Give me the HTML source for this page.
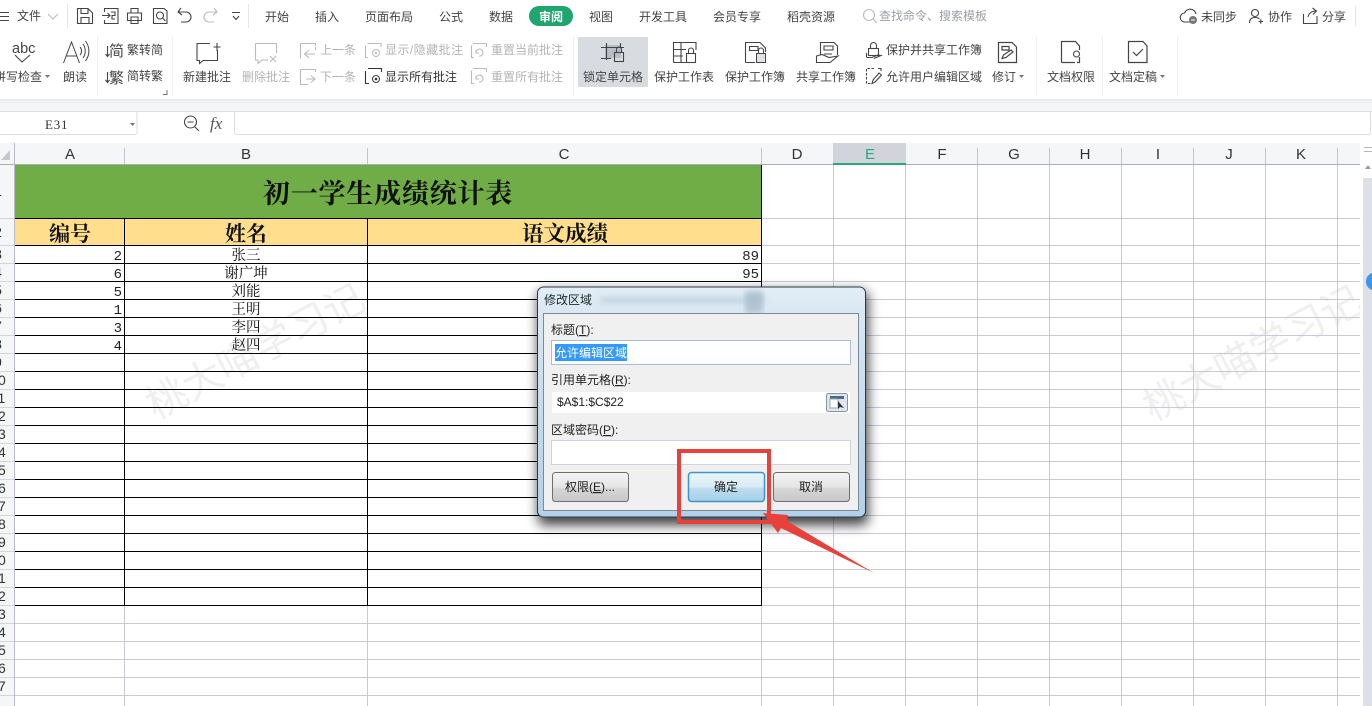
<!DOCTYPE html>
<html lang="zh"><head><meta charset="utf-8"><title>初一学生成绩统计表</title>
<style>
html,body{margin:0;padding:0;width:1372px;height:706px;overflow:hidden;background:#fff}
svg{display:block}
text{font-family:"Liberation Sans","Noto Sans CJK SC",sans-serif;font-size:12px;fill:#444}
.d{fill:#b4b4b4}
.s{font-family:"Liberation Serif","Noto Serif CJK SC",serif;fill:#111;font-size:14.5px}
.m{font-family:"Liberation Mono",monospace;fill:#222;font-size:14px}
.h{font-family:"Noto Serif CJK SC",serif;font-weight:700;fill:#111}
.c{font-size:15px;fill:#333;text-anchor:middle}
.r{font-size:14px;fill:#333;text-anchor:middle}
.w{font-size:40px;fill:#efeff1}
.i{fill:none;stroke:#444;stroke-width:1.1}
.g{fill:none;stroke:#bbb;stroke-width:1.1}
</style></head><body>
<svg width="1372" height="706" viewBox="0 0 1372 706" xmlns="http://www.w3.org/2000/svg">
<defs>
<linearGradient id="btn" x1="0" y1="0" x2="0" y2="1"><stop offset="0" stop-color="#f4f4f4"/><stop offset=".5" stop-color="#e6e6e6"/><stop offset=".55" stop-color="#d6d6d6"/><stop offset="1" stop-color="#c8c8c8"/></linearGradient>
<linearGradient id="ok" x1="0" y1="0" x2="0" y2="1"><stop offset="0" stop-color="#e9f5fb"/><stop offset=".5" stop-color="#d8ebf5"/><stop offset=".55" stop-color="#bcdcee"/><stop offset="1" stop-color="#a8d0e8"/></linearGradient>
<linearGradient id="glass" x1="0" y1="0" x2="0" y2="1"><stop offset="0" stop-color="#e2edf6"/><stop offset=".2" stop-color="#d3e4f1"/><stop offset="1" stop-color="#b4d0e8"/></linearGradient>
<linearGradient id="band" x1="0" y1="0" x2="0" y2="1"><stop offset="0" stop-color="#e6e7e9"/><stop offset=".3" stop-color="#f3f4f6"/><stop offset="1" stop-color="#f5f5f7"/></linearGradient>
<filter id="sh" x="-15%" y="-15%" width="130%" height="135%"><feGaussianBlur stdDeviation="6"/></filter>
<filter id="bl" x="-10%" y="-100%" width="120%" height="300%"><feGaussianBlur stdDeviation="3"/></filter>
</defs>

<!-- sheet -->
<rect x="0" y="135" width="1372" height="571" fill="#fff"/>
<text class="w" transform="translate(156 420) rotate(-28)">桃大喵学习记</text>
<text class="w" transform="translate(1153 422) rotate(-28)">桃大喵学习记</text>
<!-- gray grid -->
<path stroke="#c8cad6" fill="none" d="M124.5 605V706M367.5 605V706M761.5 605V706M833.5 165V706M905.5 165V706M977.5 165V706M1049.5 165V706M1121.5 165V706M1193.5 165V706M1265.5 165V706M1337.5 165V706
M762 218.5H1360M762 245.5H1360M762 263.5H1360M762 281.5H1360M762 299.5H1360M762 317.5H1360M762 335.5H1360M762 353.5H1360M762 371.5H1360M762 389.5H1360M762 407.5H1360M762 425.5H1360M762 443.5H1360M762 461.5H1360M762 479.5H1360M762 497.5H1360M762 515.5H1360M762 533.5H1360M762 551.5H1360M762 569.5H1360M762 587.5H1360M762 605.5H1360M15 623.5H1360M15 641.5H1360M15 659.5H1360M15 677.5H1360M15 695.5H1360"/>

<!-- table fills -->
<rect x="15" y="165" width="746" height="53" fill="#70ad47"/>
<rect x="15" y="219" width="746" height="26" fill="#ffdf8e"/>
<text class="h" x="388" y="203" text-anchor="middle" style="font-size:27px;letter-spacing:.8px">初一学生成绩统计表</text>
<text class="h" x="70" y="241" text-anchor="middle" style="font-size:21px">编号</text>
<text class="h" x="246" y="241" text-anchor="middle" style="font-size:21px">姓名</text>
<text class="h" x="565" y="241" text-anchor="middle" style="font-size:21.500px">语文成绩</text>
<path stroke="#000" fill="none" d="M124.5 218V605M367.5 218V605M761.5 164V606
M15 218.5H762M15 245.5H762M15 263.5H762M15 281.5H762M15 299.5H762M15 317.5H762M15 335.5H762M15 353.5H762M15 371.5H762M15 389.5H762M15 407.5H762M15 425.5H762M15 443.5H762M15 461.5H762M15 479.5H762M15 497.5H762M15 515.5H762M15 533.5H762M15 551.5H762M15 569.5H762M15 587.5H762M15 605.5H762"/>
<text class="m" x="122" y="260" text-anchor="end">2</text>
<text class="m" x="122" y="278" text-anchor="end">6</text>
<text class="m" x="122" y="296" text-anchor="end">5</text>
<text class="m" x="122" y="314" text-anchor="end">1</text>
<text class="m" x="122" y="332" text-anchor="end">3</text>
<text class="m" x="122" y="350" text-anchor="end">4</text>
<text class="m" x="759" y="260" text-anchor="end">89</text>
<text class="m" x="759" y="278" text-anchor="end">95</text>
<text class="s" x="246" y="260" text-anchor="middle">张三</text>
<text class="s" x="246" y="278" text-anchor="middle">谢广坤</text>
<text class="s" x="246" y="296" text-anchor="middle">刘能</text>
<text class="s" x="246" y="314" text-anchor="middle">王明</text>
<text class="s" x="246" y="332" text-anchor="middle">李四</text>
<text class="s" x="246" y="350" text-anchor="middle">赵四</text>

<!-- column header -->
<rect x="0" y="143" width="1360" height="21" fill="#f5f6f8"/>
<rect x="833" y="143" width="73" height="21" fill="#d1d4da"/>
<path stroke="#c3c6ce" fill="none" d="M124.5 148V164M367.5 148V164M761.5 148V164M977.5 148V164M1049.5 148V164M1121.5 148V164M1193.5 148V164M1265.5 148V164M1337.5 148V164"/>
<path stroke="#a9adb5" fill="none" d="M0 164.5H833M906 164.5H1360"/>
<rect x="833" y="163" width="73" height="2" fill="#2ea67c"/>
<path d="M1 160H10V150Z" fill="#c4c7cc"/>
<text class="c" x="70" y="159">A</text><text class="c" x="246" y="159">B</text><text class="c" x="564" y="159">C</text><text class="c" x="797" y="159">D</text><text class="c" x="870" y="159" style="fill:#2ea67c">E</text><text class="c" x="942" y="159">F</text><text class="c" x="1014" y="159">G</text><text class="c" x="1085" y="159">H</text><text class="c" x="1158" y="159">I</text><text class="c" x="1229" y="159">J</text><text class="c" x="1301" y="159">K</text>

<!-- row header -->
<rect x="0" y="165" width="14" height="541" fill="#f5f6f8"/>
<path stroke="#b9bcc6" fill="none" d="M14.5 143V706"/>
<path stroke="#d3d5dc" fill="none" d="M0 218.5H14M0 245.5H14M0 263.5H14M0 281.5H14M0 299.5H14M0 317.5H14M0 335.5H14M0 353.5H14M0 371.5H14M0 389.5H14M0 407.5H14M0 425.5H14M0 443.5H14M0 461.5H14M0 479.5H14M0 497.5H14M0 515.5H14M0 533.5H14M0 551.5H14M0 569.5H14M0 587.5H14M0 605.5H14M0 623.5H14M0 641.5H14M0 659.5H14M0 677.5H14M0 695.5H14"/>
<text class="r" x="-2" y="196">1</text><text class="r" x="-2" y="237">2</text><text class="r" x="-2" y="259">3</text><text class="r" x="-2" y="277">4</text><text class="r" x="-2" y="295">5</text><text class="r" x="-2" y="313">6</text><text class="r" x="-2" y="331">7</text><text class="r" x="-2" y="349">8</text><text class="r" x="-2" y="367">9</text>
<text class="r" x="-2" y="385">10</text><text class="r" x="-2" y="403">11</text><text class="r" x="-2" y="421">12</text><text class="r" x="-2" y="439">13</text><text class="r" x="-2" y="457">14</text><text class="r" x="-2" y="475">15</text><text class="r" x="-2" y="493">16</text><text class="r" x="-2" y="511">17</text><text class="r" x="-2" y="529">18</text><text class="r" x="-2" y="547">19</text><text class="r" x="-2" y="565">20</text><text class="r" x="-2" y="583">21</text><text class="r" x="-2" y="601">22</text><text class="r" x="-2" y="619">23</text><text class="r" x="-2" y="637">24</text><text class="r" x="-2" y="655">25</text><text class="r" x="-2" y="673">26</text><text class="r" x="-2" y="691">27</text>

<!-- scrollbar -->
<rect x="1360" y="135" width="12" height="571" fill="#fff"/>
<path stroke="#b5b8c0" fill="none" d="M1364 147.5H1372M1364 151.5H1372"/>
<path d="M1365 169L1368 165L1371 169Z" fill="#9a9da3"/>
<rect x="1363" y="178" width="9" height="528" fill="#dde0e5"/>
<path d="M1372 273A9 9 0 0 0 1372 290Z" fill="#3d97e8"/>

<!-- ribbon -->
<rect x="0" y="0" width="1372" height="99" fill="#fff"/>
<rect x="0" y="99" width="1372" height="12" fill="url(#band)"/>
<!-- formula bar -->
<rect x="0" y="111" width="1372" height="32" fill="#fff"/>
<path stroke="#dcdde0" d="M0 111.500H1372" fill="none"/>
<rect x="-2" y="111.500" width="139" height="23" rx="2" fill="#fff" stroke="#dcdde0"/>
<text x="45" y="129" style="font-family:'Liberation Serif',serif;font-size:13px;letter-spacing:.8px;fill:#333">E31</text>
<path d="M130 123H135L132.500 126Z" fill="#777"/>
<circle class="i" cx="190.500" cy="122" r="6"/><path class="i" d="M187.500 122H193.500M195 127L199 131"/>
<text x="210" y="129" style="font-family:'Liberation Serif',serif;font-style:italic;font-size:17px;fill:#555">fx</text>
<rect x="234.500" y="111.500" width="1136" height="23" rx="2" fill="#fff" stroke="#dcdde0"/>

<!-- title bar -->
<path class="i" d="M0 12.500H9M0 16.500H9M0 20.500H9"/>
<text x="17" y="20">文件</text>
<path class="g" d="M48 14L53 19L58 14"/>
<path stroke="#e6e6e6" fill="none" d="M67.500 4V28M248.500 4V28M1355.500 6V26"/>
<!-- quick icons -->
<path class="i" d="M77.500 8.500H88L92.500 13V23.500H77.500ZM81 8.500V13.500H88V8.500M81 23.500V17.500H89V23.500"/>
<path class="i" d="M104.500 12V8.500H118V23.500H104.500V20M102 15.500H110M107.500 13L110 15.500L107.500 18M111 12H115V15.500H112V19H115"/>
<path class="i" d="M131 13V8.500H138V13M127.500 13H141.500V20.500H127.500ZM131 17H138V23.500H131Z"/>
<path class="i" d="M153.500 8.500H164L167 11V23.500H153.500Z"/><circle class="i" cx="160" cy="15.500" r="3.500"/><path class="i" d="M162.500 18L165.500 21"/>
<path class="i" d="M181 8L178 12L182 15M178.500 12H186A5 5 0 0 1 186 22H181"/>
<path class="g" d="M214 8L217 12L213 15M216.500 12H209A5 5 0 0 0 209 22H214"/>
<path class="i" d="M232 12.500H240M233 16L236 19.500L239 16"/>
<!-- tabs -->
<text x="265" y="21">开始</text><text x="315" y="21">插入</text><text x="365" y="21">页面布局</text><text x="439" y="21">公式</text><text x="489" y="21">数据</text>
<rect x="529" y="6" width="44" height="20" rx="10" fill="#21a56f"/>
<text x="539" y="21" style="fill:#fff;font-weight:700">审阅</text>
<text x="589" y="21">视图</text><text x="639" y="21">开发工具</text><text x="713" y="21">会员专享</text><text x="787" y="21">稻壳资源</text>
<circle class="g" cx="869" cy="15" r="5.500"/><path class="g" d="M873 19L877 23"/>
<text x="879" y="20" style="fill:#9b9ea6">查找命令、搜索模板</text>
<path class="i" d="M1190 22H1185A4.500 4.500 0 0 1 1184.500 13A6 6 0 0 1 1196 14"/><circle cx="1193" cy="20" r="4" fill="#777"/><path d="M1191 20H1195" stroke="#fff"/>
<text x="1201" y="21">未同步</text>
<circle class="i" cx="1255" cy="13" r="3.500"/><path class="i" d="M1249.500 23C1249.500 19 1252 17.500 1255 17.500C1257 17.500 1258.500 18 1259.500 19M1258.500 21.500H1263M1260.800 19.300V23.700"/>
<text x="1268" y="21">协作</text>
<path class="i" d="M1303.500 14V23.500H1317V16M1308 17C1309 13 1312 11 1316 11M1312.500 8L1316.500 11L1313 14.500"/>
<text x="1322" y="21">分享</text>

<!-- ribbon separators -->
<path stroke="#f0f0f0" fill="none" d="M97.500 36V96M172.500 36V96M573.500 36V96M1036.500 36V96M1102.500 36V96M1177.500 36V96"/>
<!-- spell -->
<text x="12" y="53" style="font-size:14.500px;fill:#444">abc</text>
<path class="i" d="M15 55L22 62L30 55"/>
<text x="-6" y="81">拼写检查</text><path d="M45 75H50L47.500 78Z" fill="#777"/>
<path class="i" d="M63.500 63L71.500 42L79.500 63M66.500 56H76.500M80 47C82 49 82 53 80 55M83 44C86 48 86 54 83 58M85.500 41C90 47 90 55 85.500 61" style="stroke-width:1"/>
<text x="63" y="81">朗读</text>
<text x="109" y="56" style="font-size:15px">简</text><path class="i" d="M107.500 46V56M105.500 54L107.500 56.500L109.500 54"/>
<text x="127" y="54">繁转简</text>
<text x="109" y="83" style="font-size:15px">繁</text><path class="i" d="M107.500 72V82M105.500 80L107.500 82.500L109.500 80"/>
<text x="127" y="80">简转繁</text>
<path stroke="#777" fill="none" d="M163 94.500H167V90"/>
<!-- comments -->
<path class="i" d="M210 43.500H197V60.500H199.500V63.500L203 60.500H217.500V50M213.500 47H220.500M217 43V51"/>
<text x="183" y="81">新建批注</text>
<path class="g" d="M255.500 43.500H276.500V53M255.500 43.500V60H258V63.500L262 60H268M270 56L276 62M276 56L270 62"/>
<text class="d" x="242" y="81">删除批注</text>
<path class="g" d="M300.500 43.500H315.500V46M300.500 43.500V58.500M315.500 47V50M309 50L304.500 54L309 58M305 54H315"/>
<text class="d" x="320" y="54">上一条</text>
<path class="g" d="M300.500 69.500H315.500V72M300.500 69.500V84.500H308M306 79H315M311 75.500L315 79L311 82.500"/>
<text class="d" x="320" y="81">下一条</text>
<path class="g" d="M367.500 43.500H381V47M365.500 45.500V57.500H368"/><circle class="g" cx="376" cy="53" r="3.500"/><circle cx="376" cy="53" r="1.200" fill="#bbb"/>
<text class="d" x="385" y="54" textLength="78">显示/隐藏批注</text>
<path class="i" d="M368 68.500H381.500V72M365.500 71V83.500H369" style="stroke:#333"/><circle class="i" cx="376" cy="79" r="3.500"/><circle cx="376" cy="79" r="1.300" fill="#333"/>
<text x="385" y="81" style="fill:#333">显示所有批注</text>
<path class="g" d="M473 43.500H486.500V47M471.500 45.500V57.500H474M476 52A3.500 3.500 0 1 1 479 56M476 50V53H479"/>
<text class="d" x="491" y="54">重置当前批注</text>
<path class="g" d="M473 68.500H486.500V72M471.500 70.500V83.500H474M476 78A3.500 3.500 0 1 1 479 82M476 76V79H479"/>
<text class="d" x="491" y="81">重置所有批注</text>
<!-- protect -->
<rect x="578" y="37" width="70" height="50" fill="#d8dbe0"/>
<rect x="605" y="45" width="16" height="13" fill="#b9bdc7"/>
<path class="i" d="M601 47.500H624M601 58.500H611M606.500 43V60M620.500 43V47"/><rect class="i" x="614.500" y="52.500" width="9" height="9"/><path class="i" d="M616.500 52.500V49.500A2.500 2.500 0 0 1 621.500 49.500V52.500"/>
<text x="583" y="81">锁定单元格</text>
<path class="i" d="M673.500 62.500V42.500H696V50M673.500 49.500H686M673.500 56H683M681 42.500V62.500H686M673.500 62.500H681"/><rect class="i" x="686.500" y="53.500" width="9" height="9"/><path class="i" d="M688.500 53.500V50.500A2.500 2.500 0 0 1 693.500 50.500V53.500"/>
<text x="654" y="81">保护工作表</text>
<path class="i" d="M745.500 62.500V42.500H760L765.500 48V52M745.500 62.500H755M749.500 46.500H758V50.500H749.500Z"/><rect x="756.500" y="53.500" width="9" height="9" fill="#dfe1e5" stroke="#444"/><path class="i" d="M758.500 53.500V50.500A2.500 2.500 0 0 1 763.500 50.500V53.500"/>
<text x="725" y="81">保护工作簿</text>
<path class="i" d="M820.500 55V42.500H834L837.500 46V55M824 46H833V50H824ZM824 54H832M816.500 62.500V56L822 54.500L829 57.500L838 56L830 62.500Z"/>
<text x="796" y="81">共享工作簿</text>
<rect class="i" x="868.500" y="48.500" width="10" height="7"/><path class="i" d="M870.500 48.500V45.500A3 3 0 0 1 876.500 45.500V48.500M866.500 57.500H872L878 55L881 55.500L874 58.500M866.500 53V57"/>
<text x="886" y="54">保护并共享工作簿</text>
<path class="i" d="M874 68.500H866.500V83.500H871" stroke-dasharray="2.500 1.500"/><path class="i" d="M872 83.500L873 80L879 73L881.500 75L875 82ZM878 68.500H881V71"/>
<text x="886" y="81">允许用户编辑区域</text>
<path class="i" d="M998.500 42.500H1012L1016.500 47V62.500H998.500ZM1002 46.500H1009V50H1002ZM1002 58.500L1003.500 55L1011 50L1013 52L1006 57.500Z" style="stroke-width:1.200"/>
<text x="992" y="81">修订</text><path d="M1019 75H1024L1021.500 78Z" fill="#777"/>
<path class="i" d="M1061.500 62.500V41.500H1075.500L1079.500 46V50M1061.500 62.500H1075M1079.500 57V62.500H1077" style="stroke-width:1.200"/><circle class="i" cx="1076.500" cy="54" r="3"/>
<text x="1047" y="81">文档权限</text>
<path class="i" d="M1128.500 41.500H1143L1147 46V62.500H1128.500ZM1133 52L1136.500 55.500L1143 49" style="stroke-width:1.200"/>
<text x="1109" y="81">文档定稿</text><path d="M1160 75H1165L1162.500 78Z" fill="#777"/>

<!-- dialog -->
<rect x="538" y="291" width="330" height="234" rx="6" fill="#000" opacity=".75" filter="url(#sh)"/>
<rect x="537.500" y="287" width="328" height="230" rx="6" fill="url(#glass)" stroke="#2e3b47"/>
<rect x="600" y="297" width="165" height="6" fill="#b9cddd" opacity=".8" filter="url(#bl)"/>
<rect x="745" y="291" width="18" height="22" fill="#a9bccc" opacity=".8" filter="url(#bl)"/>
<text x="544" y="304" style="fill:#1a2a2a">修改区域</text>
<rect x="543.500" y="313.500" width="315" height="197" fill="#f0f0f0" stroke="#7b8a96"/>
<text x="551" y="334" style="fill:#222">标题(<tspan text-decoration="underline">T</tspan>):</text>
<rect x="551.500" y="340.500" width="299" height="24" fill="#fff" stroke="#a9c0d4"/>
<rect x="555" y="344" width="72" height="17" fill="#3399ff"/>
<text x="555" y="357" style="fill:#fff">允许编辑区域</text>
<text x="551" y="384" style="fill:#222">引用单元格(<tspan text-decoration="underline">R</tspan>):</text>
<rect x="552" y="392" width="298" height="21" fill="#fff"/>
<text x="557" y="406" style="fill:#222">$A$1:$C$22</text>
<rect x="826.500" y="393.500" width="21" height="18" rx="2" fill="#dfe6ee" stroke="#8295a8"/>
<rect x="830" y="396" width="14" height="3" fill="#4a6a8a"/><path d="M830 399H838V408H830Z" fill="#fff" stroke="#9aa"/><path d="M838 401L844 408L840 407L838 409Z" fill="#334"/>
<text x="551" y="434" style="fill:#222">区域密码(<tspan text-decoration="underline">P</tspan>):</text>
<rect x="551.500" y="440.500" width="299" height="24" fill="#fff" stroke="#d0d4d8"/>
<rect x="552.500" y="472.500" width="76" height="29" rx="3" fill="url(#btn)" stroke="#6e6e6e"/>
<text x="565" y="491" style="fill:#222">权限(<tspan text-decoration="underline">E</tspan>)...</text>
<rect x="688.500" y="472.500" width="76" height="29" rx="3" fill="url(#ok)" stroke="#3c96c8" stroke-width="1.500"/>
<text x="714" y="491" style="fill:#222">确定</text>
<rect x="773.500" y="472.500" width="76" height="29" rx="3" fill="url(#btn)" stroke="#6e6e6e"/>
<text x="799" y="491" style="fill:#222">取消</text>

<!-- annotations -->
<rect x="679" y="451" width="90" height="71" fill="none" stroke="#e8403a" stroke-width="4"/>
<path d="M763 513L788 515L787 521L874 573L781 528L778 533Z" fill="#e8403a"/>
</svg>
</body></html>
